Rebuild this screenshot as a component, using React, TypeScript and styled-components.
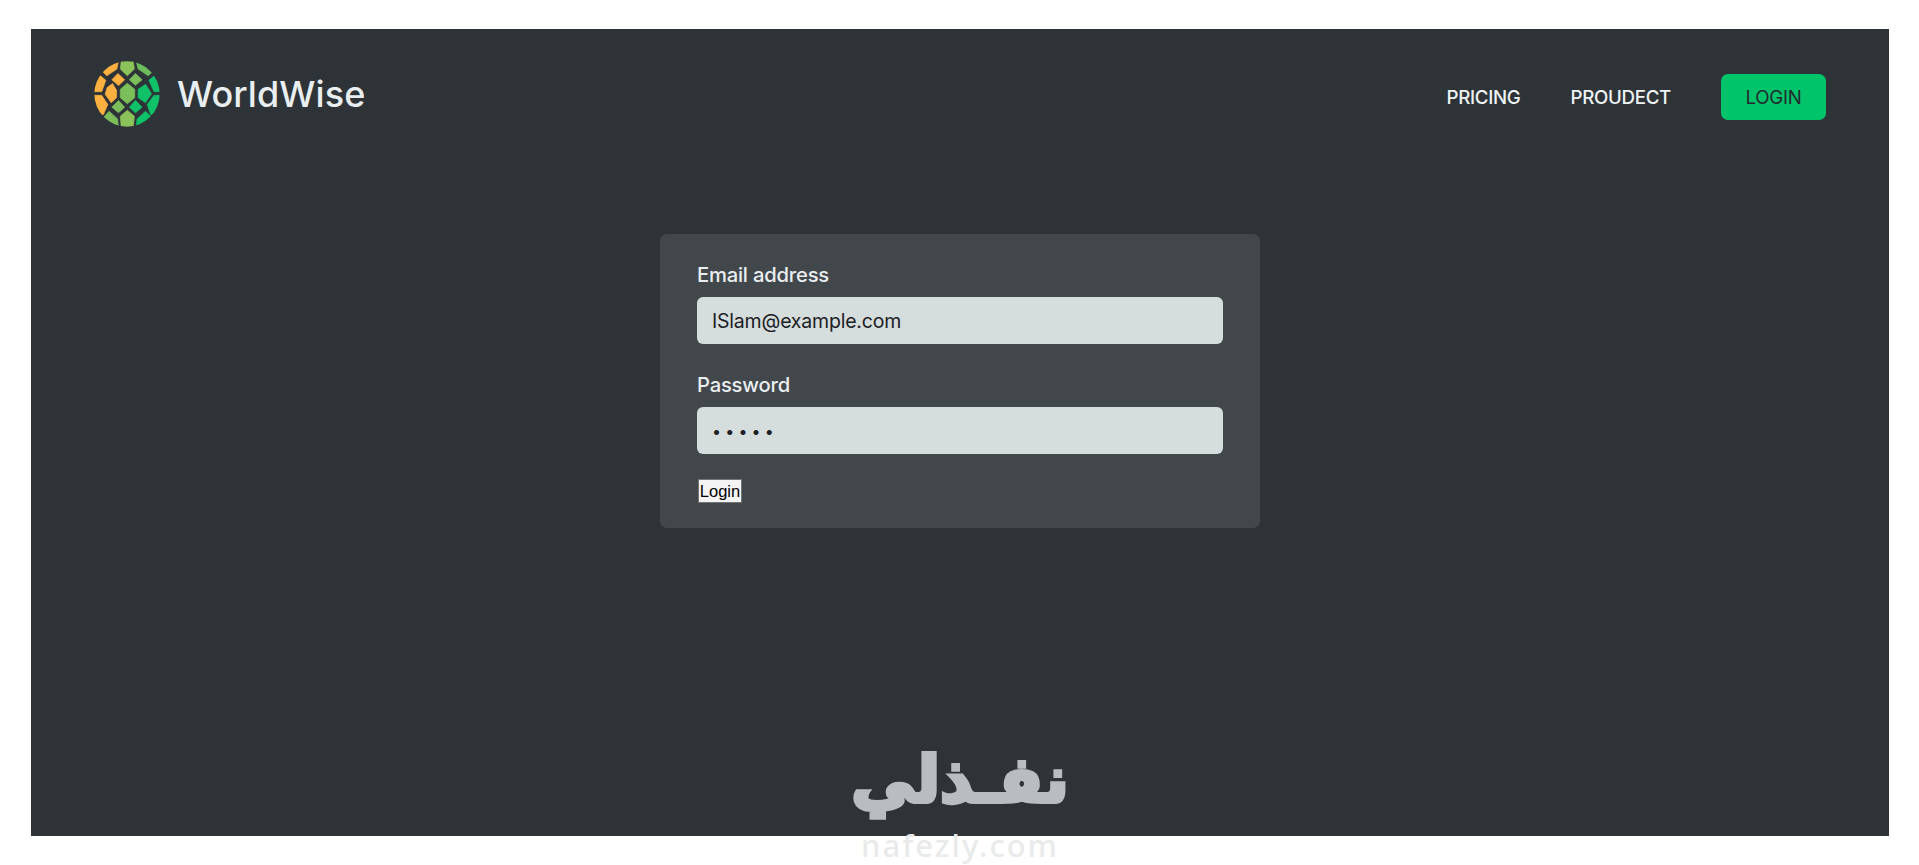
import React from "react";
import styled, { createGlobalStyle } from "styled-components";

const Global = createGlobalStyle`
  html, body { margin: 0; padding: 0; background: #ffffff; }
  body { font-family: Inter, "Noto Sans", sans-serif; overflow: hidden; }
  * { box-sizing: border-box; }
`;

const Page = styled.div`
  position: relative;
  width: 1919px;
  height: 865px;
  padding: 29px 30px 29px 31px;
  overflow: hidden;
`;

const Panel = styled.main`
  height: 807px;
  background: #2e3338;
  padding: 32px 63px 0;
`;

const NavBar = styled.nav`
  display: flex;
  align-items: center;
  justify-content: space-between;
  height: 66px;
`;

const Brand = styled.div`
  display: flex;
  align-items: center;
  gap: 17px;
`;

const BrandName = styled.span`
  font-size: 36px;
  font-weight: 500;
  letter-spacing: 0.1px;
  color: #e9eef0;
`;

const NavLinks = styled.div`
  display: flex;
  align-items: center;
  gap: 50px;
  padding-top: 6px;
`;

const NavLink = styled.a`
  font-size: 18.7px;
  font-weight: 500;
  letter-spacing: -0.3px;
  color: #eef3f5;
`;

const LoginLink = styled.a`
  display: flex;
  align-items: center;
  justify-content: center;
  width: 105px;
  height: 46px;
  border-radius: 7px;
  background: #00c46a;
  color: #242a2e;
  font-size: 18.7px;
  font-weight: 400;
  letter-spacing: -0.3px;
`;

const FormCard = styled.form`
  width: 600px;
  margin: 107px auto 0;
  padding: 28px 37px 25px;
  background: #42474c;
  border-radius: 7px;
  display: flex;
  flex-direction: column;
  align-items: flex-start;
`;

const Field = styled.div<{ $below: number }>`
  display: flex;
  flex-direction: column;
  gap: 10px;
  width: 100%;
  margin-bottom: ${(p) => p.$below}px;
`;

const Label = styled.label`
  font-size: 20.2px;
  line-height: 25px;
  font-weight: 500;
  letter-spacing: -0.2px;
  color: #e9eef0;
`;

const TextInput = styled.input<{ $masked?: boolean }>`
  width: 100%;
  height: 47px;
  padding: 0 15px;
  border: none;
  border-radius: 6px;
  background: #d5dddd;
  color: #1c2024;
  font-family: Inter, sans-serif;
  font-size: ${(p) => (p.$masked ? "16px" : "19.5px")};
  letter-spacing: ${(p) => (p.$masked ? "4.2px" : "-0.2px")};
  outline: none;
`;

const PlainButton = styled.button`
  width: 44px;
  height: 24px;
  padding: 0;
  margin-left: 1px;
  background: #f4f4f4;
  border: 1px solid #767676;
  color: #000;
  font-family: "Liberation Sans", Arial, sans-serif;
  font-size: 16.5px;
`;

const Watermark = styled.div`
  position: absolute;
  left: 850px;
  top: 745px;
  width: 220px;
  display: flex;
  flex-direction: column;
  align-items: center;
  pointer-events: none;
`;

const WatermarkArabic = styled.div`
  font-family: "DejaVu Sans", sans-serif;
  font-weight: 700;
  font-size: 64px;
  line-height: 70px;
  color: #b9bdc0;
  -webkit-text-stroke: 4px #b9bdc0;
`;

const WatermarkLatin = styled.div`
  font-family: "Noto Sans", sans-serif;
  font-size: 31px;
  line-height: 34px;
  margin-top: 13px;
  font-weight: 500;
  letter-spacing: 2px;
  color: #e9eaea;
`;

const cells: [string, string][] = [
  ["126,97 148,115 148,140 126,158 105,140 105,115", "#7cbf5a"],
  ["180,100 198,128 180,155 158,140 158,115", "#0fc269"],
  ["82,98 94,118 94,140 78,155 60,130 66,110", "#fbb040"],
  ["108,30 143,30 147,55 126,75 105,55", "#8bc35a"],
  ["100,30 95,55 65,75 40,50", "#fbb040"],
  ["98,68 118,87 100,104 80,87", "#fbb040"],
  ["150,68 170,87 150,103 132,87", "#7cbf5a"],
  ["152,30 158,55 188,75 215,50", "#6cbd5c"],
  ["46,75 62,88 50,122 20,122 20,75", "#fbb040"],
  ["20,133 50,133 68,160 55,190 20,190", "#fbb040"],
  ["206,75 190,88 205,122 230,122 230,75", "#0fc269"],
  ["205,133 230,133 230,190 195,190 185,160", "#0fc269"],
  ["100,148 118,168 100,185 80,168", "#7cbf5a"],
  ["150,148 170,168 150,185 132,168", "#0fc269"],
  ["126,177 147,195 143,230 108,230 105,195", "#8bc35a"],
  ["72,180 97,203 100,230 40,215", "#7cbf5a"],
  ["180,180 155,203 152,230 215,215", "#0fc269"],
];

const GlobeLogo = () => (
  <svg width="66" height="66" viewBox="27 31 196 196" aria-label="WorldWise logo">
    <defs>
      <clipPath id="globe">
        <circle cx="125" cy="129" r="97" />
      </clipPath>
    </defs>
    <g clipPath="url(#globe)">
      {cells.map(([points, fill]) => (
        <polygon
          key={points}
          points={points}
          fill={fill}
          stroke={fill}
          strokeWidth={2}
          strokeLinejoin="round"
        />
      ))}
    </g>
  </svg>
);

export default function App() {
  return (
    <Page>
      <Global />
      <Panel>
        <NavBar>
          <Brand>
            <GlobeLogo />
            <BrandName>WorldWise</BrandName>
          </Brand>
          <NavLinks>
            <NavLink>PRICING</NavLink>
            <NavLink>PROUDECT</NavLink>
            <LoginLink>LOGIN</LoginLink>
          </NavLinks>
        </NavBar>
        <FormCard onSubmit={(e) => e.preventDefault()}>
          <Field $below={28}>
            <Label htmlFor="email">Email address</Label>
            <TextInput id="email" type="email" defaultValue="ISlam@example.com" />
          </Field>
          <Field $below={25}>
            <Label htmlFor="password">Password</Label>
            <TextInput id="password" type="password" defaultValue="12345" $masked />
          </Field>
          <PlainButton type="submit">Login</PlainButton>
        </FormCard>
      </Panel>
      <Watermark>
        <WatermarkArabic dir="rtl">نفـذلي</WatermarkArabic>
        <WatermarkLatin>nafezly.com</WatermarkLatin>
      </Watermark>
    </Page>
  );
}
